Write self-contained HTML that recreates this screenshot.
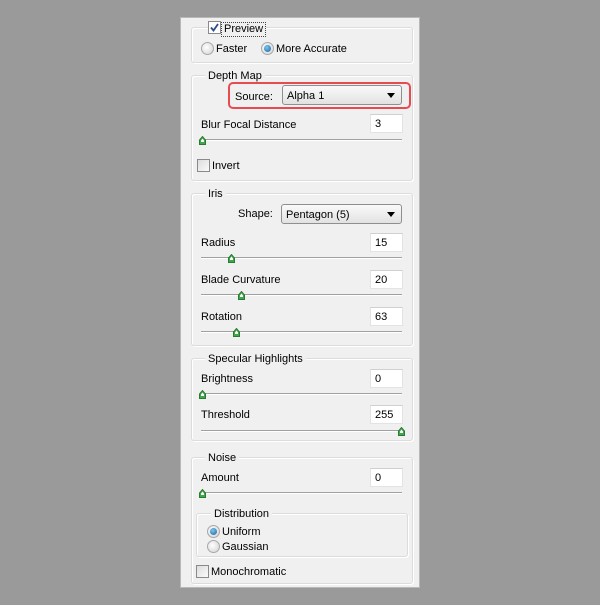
<!DOCTYPE html>
<html><head><style>
*{margin:0;padding:0;box-sizing:border-box}
body{width:600px;height:605px;background:#9a9a9a;position:relative;overflow:hidden;font-family:"Liberation Sans",sans-serif;font-size:11px;color:#000}
.a{position:absolute}
.panel{left:180px;top:17px;width:240px;height:571px;background:#f0f0f0;border:1px solid #b8b8b8}
.grp{border:1px solid #dcdcdc;border-radius:3px;box-shadow:inset 1px 1px 0 #fff,1px 1px 0 #fff}
.lbl{background:#f0f0f0;padding:0 3px;line-height:13px}
.t{line-height:13px;white-space:nowrap;margin-top:1px}
.inp{background:#fff;border:1px solid #e3e3e3;border-top-color:#d0d0d0;height:19px;width:33px;padding:3px 0 0 4px;line-height:13px}
.sl{height:2px;border-top:1px solid #a0a0a0;border-bottom:1px solid #fff;width:201px;left:201px}
.th{width:7px;height:9px}
.cb{width:13px;height:13px;border:1px solid #8a8a8a;background:linear-gradient(135deg,#ddd,#fafafa)}
.rd{width:13px;height:13px;border-radius:50%;border:1px solid #a8a8a8;background:radial-gradient(circle at 40% 40%,#fff,#d0d0d0)}
.rd.on::after{content:"";position:absolute;left:2px;top:2px;width:7px;height:7px;border-radius:50%;background:radial-gradient(circle at 40% 35%,#7ac8f0,#1a5fa0)}
.sel{background:linear-gradient(#fafafa,#e2e2e2);border:1px solid #8f8f8f;border-radius:3px;height:20px;padding:4px 0 0 4px;line-height:13px}
.sel::after{content:"";position:absolute;right:6px;top:7px;border:4px solid transparent;border-top:5px solid #000;border-bottom:none}
</style></head><body>
<div class="a panel"></div>
<svg width="0" height="0" style="position:absolute"><defs><g id="thumb"><path d="M0.5 4 L3.5 0.5 L6.5 4 V8.5 H0.5Z" fill="#3fa84a" stroke="#2b7a33"/><path d="M2 4.5 L3.5 2.5 L5 4.5 V6 H2Z" fill="#fff"/></g></defs></svg>

<div class="a grp" style="left:191px;top:27px;width:222px;height:36px"></div>
<div class="a cb" style="left:208px;top:21px;background:#fff"><svg width="11" height="11" style="position:absolute;left:0;top:0"><path d="M2 5.5 L4.5 8.5 L9 2" stroke="#2c4a8a" stroke-width="1.8" fill="none"/></svg></div>
<div class="a t lbl" style="left:221px;top:21px;border:1px dotted #444;padding:0 2px">Preview</div>
<div class="a rd" style="left:201px;top:42px"></div>
<div class="a t" style="left:216px;top:42px">Faster</div>
<div class="a rd on" style="left:261px;top:42px"></div>
<div class="a t" style="left:276px;top:42px">More Accurate</div>

<div class="a grp" style="left:191px;top:75px;width:222px;height:106px"></div>
<div class="a t lbl" style="left:205px;top:69px">Depth Map</div>
<div class="a" style="left:228px;top:82px;width:183px;height:27px;border:2px solid #e84a52;border-radius:5px"></div>
<div class="a t" style="left:235px;top:90px">Source:</div>
<div class="a sel" style="left:282px;top:85px;width:120px">Alpha 1</div>
<div class="a t" style="left:201px;top:118px">Blur Focal Distance</div>
<div class="a inp" style="left:370px;top:114px">3</div>
<div class="a sl" style="top:139px"></div>
<svg class="a th" style="left:199px;top:136px"><use href="#thumb"/></svg>
<div class="a cb" style="left:197px;top:159px"></div>
<div class="a t" style="left:212px;top:159px">Invert</div>

<div class="a grp" style="left:191px;top:193px;width:222px;height:153px"></div>
<div class="a t lbl" style="left:205px;top:187px">Iris</div>
<div class="a t" style="left:238px;top:207px">Shape:</div>
<div class="a sel" style="left:281px;top:204px;width:121px">Pentagon (5)</div>
<div class="a t" style="left:201px;top:236px">Radius</div>
<div class="a inp" style="left:370px;top:233px">15</div>
<div class="a sl" style="top:257px"></div>
<svg class="a th" style="left:228px;top:254px"><use href="#thumb"/></svg>
<div class="a t" style="left:201px;top:273px">Blade Curvature</div>
<div class="a inp" style="left:370px;top:270px">20</div>
<div class="a sl" style="top:294px"></div>
<svg class="a th" style="left:238px;top:291px"><use href="#thumb"/></svg>
<div class="a t" style="left:201px;top:310px">Rotation</div>
<div class="a inp" style="left:370px;top:307px">63</div>
<div class="a sl" style="top:331px"></div>
<svg class="a th" style="left:233px;top:328px"><use href="#thumb"/></svg>

<div class="a grp" style="left:191px;top:358px;width:222px;height:83px"></div>
<div class="a t lbl" style="left:205px;top:352px">Specular Highlights</div>
<div class="a t" style="left:201px;top:372px">Brightness</div>
<div class="a inp" style="left:370px;top:369px">0</div>
<div class="a sl" style="top:393px"></div>
<svg class="a th" style="left:199px;top:390px"><use href="#thumb"/></svg>
<div class="a t" style="left:201px;top:408px">Threshold</div>
<div class="a inp" style="left:370px;top:405px">255</div>
<div class="a sl" style="top:430px"></div>
<svg class="a th" style="left:398px;top:427px"><use href="#thumb"/></svg>

<div class="a grp" style="left:191px;top:457px;width:222px;height:127px"></div>
<div class="a t lbl" style="left:205px;top:451px">Noise</div>
<div class="a t" style="left:201px;top:471px">Amount</div>
<div class="a inp" style="left:370px;top:468px">0</div>
<div class="a sl" style="top:492px"></div>
<svg class="a th" style="left:199px;top:489px"><use href="#thumb"/></svg>
<div class="a grp" style="left:196px;top:513px;width:212px;height:44px"></div>
<div class="a t lbl" style="left:211px;top:507px">Distribution</div>
<div class="a rd on" style="left:207px;top:525px"></div>
<div class="a t" style="left:222px;top:525px">Uniform</div>
<div class="a rd" style="left:207px;top:540px"></div>
<div class="a t" style="left:222px;top:540px">Gaussian</div>
<div class="a cb" style="left:196px;top:565px"></div>
<div class="a t" style="left:211px;top:565px">Monochromatic</div>
</body></html>
